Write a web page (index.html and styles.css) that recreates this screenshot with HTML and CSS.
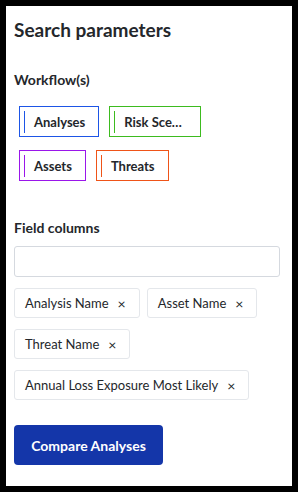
FILE: index.html
```html
<!DOCTYPE html>
<html lang="en">
<head>
    <meta charset="UTF-8">
    <title>Search parameters</title>
    <link rel="stylesheet" href="styles.css">
</head>
<body>

<div class="panel">
    <h2 class="panel-title">Search parameters</h2>

    <div class="field-label">Workflow(s)</div>
    <div class="workflows">
        <div class="workflow workflow-blue"><span class="workflow-bar"></span><span class="workflow-name">Analyses</span></div>
        <div class="workflow workflow-green"><span class="workflow-bar"></span><span class="workflow-name workflow-name-clip">Risk Scenarios</span></div>
        <div class="workflow workflow-purple"><span class="workflow-bar"></span><span class="workflow-name">Assets</span></div>
        <div class="workflow workflow-orange"><span class="workflow-bar"></span><span class="workflow-name">Threats</span></div>
    </div>

    <div class="field-label columns-label">Field columns</div>
    <input class="column-search" type="text">
    <div class="tags">
        <span class="tag">Analysis Name <span class="tag-remove">×</span></span>
        <span class="tag">Asset Name <span class="tag-remove">×</span></span>
        <span class="tag">Threat Name <span class="tag-remove">×</span></span>
        <span class="tag">Annual Loss Exposure Most Likely <span class="tag-remove">×</span></span>
    </div>

    <button class="compare-button">Compare Analyses</button>
</div>

</body>
</html>
```

FILE: styles.css
```css
body {
    margin: 0;
    background-color: #000000;
    font-family: Lato, "Open Sans", sans-serif;
    color: #24272b;
}

.panel {
    margin: 6px;
    width: 286px;
    height: 480px;
    box-sizing: border-box;
    padding: 12px 8px 0 8px;
    background-color: #ffffff;
}

.panel-title {
    margin: 0 0 28px 0;
    font-size: 19px;
    line-height: 24px;
    font-weight: bold;
}

.field-label {
    font-size: 14px;
    line-height: 20px;
    font-weight: bold;
}

.workflows {
    display: flex;
    flex-wrap: wrap;
    column-gap: 10px;
    row-gap: 13px;
    max-width: 210px;
    margin-top: 16px;
    padding-left: 5px;
}

.workflow {
    display: flex;
    align-items: center;
    height: 31px;
    box-sizing: border-box;
    border: 1px solid;
    padding: 0 13px 0 4px;
}
.workflow-bar {
    width: 1px;
    height: 22px;
    margin-right: 9px;
    background-color: currentColor;
}
.workflow-name {
    color: #24272b;
    font-size: 13px;
    font-weight: bold;
}
.workflow-name-clip {
    max-width: 60px;
    white-space: nowrap;
    overflow: hidden;
    text-overflow: ellipsis;
    margin-right: 3px;
}

.workflow-blue { color: #1d55e6; }
.workflow-green { color: #3dbb1f; }
.workflow-purple { color: #9a16ea; }
.workflow-orange { color: #ef5418; }

.columns-label {
    margin-top: 37px;
}

.column-search {
    display: block;
    margin-top: 8px;
    width: 266px;
    height: 31px;
    box-sizing: border-box;
    border: 1px solid #d5d9df;
    border-radius: 3px;
    font: inherit;
}

.tags {
    display: flex;
    flex-wrap: wrap;
    column-gap: 7px;
    row-gap: 11px;
    margin-top: 11px;
}

.tag {
    display: inline-flex;
    align-items: center;
    height: 30px;
    box-sizing: border-box;
    padding: 0 13px 0 10px;
    border: 1px solid #e4e7eb;
    border-radius: 3px;
    font-size: 13px;
}
.tag-remove {
    margin-left: 9px;
    font-size: 14px;
}

.compare-button {
    display: block;
    margin-top: 25px;
    width: 149px;
    height: 40px;
    border: none;
    border-radius: 4px;
    background-color: #1436a9;
    color: #ffffff;
    font-family: inherit;
    font-size: 14px;
    font-weight: bold;
}
```
